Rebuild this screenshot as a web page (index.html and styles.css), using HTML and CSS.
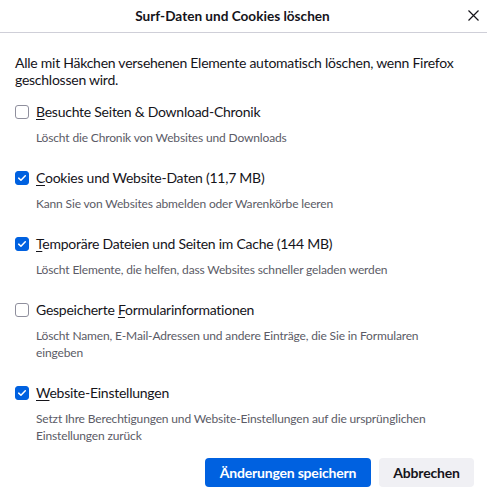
FILE: index.html
```html
<!DOCTYPE html>
<html lang="de">
<head>
<meta charset="utf-8">
<link rel="stylesheet" href="styles.css">
</head>
<body>
<div class="dialog">
  <header class="titlebar">
    <h1 class="title">Surf-Daten und Cookies löschen</h1>
    <button class="close" aria-label="Schließen">
      <svg width="11" height="11" viewBox="0 0 11 11"><path d="M0.5 0.5L10.5 10.5M10.5 0.5L0.5 10.5" stroke="#15141a" stroke-width="1.2" fill="none"/></svg>
    </button>
  </header>
  <main class="content">
    <p class="intro">Alle mit Häkchen versehenen Elemente automatisch löschen, wenn Firefox geschlossen wird.</p>
    <div class="options">
      <div class="option">
        <label class="row"><span class="box"></span><span class="label"><u>B</u>esuchte Seiten &amp; Download-Chronik</span></label>
        <p class="desc">Löscht die Chronik von Websites und Downloads</p>
      </div>
      <div class="option">
        <label class="row"><span class="box checked"><svg viewBox="0 0 16 16" width="16" height="16"><path d="M3.6 8.2L6.6 11.1L12.4 4.9" stroke="#fff" stroke-width="2" fill="none" stroke-linecap="round" stroke-linejoin="round"/></svg></span><span class="label"><u>C</u>ookies und Website-Daten (11,7 MB)</span></label>
        <p class="desc">Kann Sie von Websites abmelden oder Warenkörbe leeren</p>
      </div>
      <div class="option">
        <label class="row"><span class="box checked"><svg viewBox="0 0 16 16" width="16" height="16"><path d="M3.6 8.2L6.6 11.1L12.4 4.9" stroke="#fff" stroke-width="2" fill="none" stroke-linecap="round" stroke-linejoin="round"/></svg></span><span class="label"><u>T</u>emporäre Dateien und Seiten im Cache (144 MB)</span></label>
        <p class="desc">Löscht Elemente, die helfen, dass Websites schneller geladen werden</p>
      </div>
      <div class="option">
        <label class="row"><span class="box"></span><span class="label">Gespeicherte <u>F</u>ormularinformationen</span></label>
        <p class="desc">Löscht Namen, E-Mail-Adressen und andere Einträge, die Sie in Formularen eingeben</p>
      </div>
      <div class="option">
        <label class="row"><span class="box checked"><svg viewBox="0 0 16 16" width="16" height="16"><path d="M3.6 8.2L6.6 11.1L12.4 4.9" stroke="#fff" stroke-width="2" fill="none" stroke-linecap="round" stroke-linejoin="round"/></svg></span><span class="label"><u>W</u>ebsite-Einstellungen</span></label>
        <p class="desc">Setzt Ihre Berechtigungen und Website-Einstellungen auf die ursprünglichen Einstellungen zurück</p>
      </div>
    </div>
    <div class="actions">
      <button class="btn primary">Änderungen speichern</button>
      <button class="btn secondary">Abbrechen</button>
    </div>
  </main>
</div>
</body>
</html>
```

FILE: styles.css
```css
* { box-sizing: border-box; }
html, body { margin: 0; padding: 0; background: #fff; }
body {
  font-family: Lato, "Noto Sans", sans-serif;
  color: #15141a;
  width: 487px;
  height: 501px;
  overflow: hidden;
}
.titlebar {
  height: 33px;
  border-bottom: 1px solid #cfcfd8;
  display: flex;
  align-items: center;
  justify-content: center;
  padding-right: 22px;
  position: relative;
}
.title {
  margin: 0;
  font-size: 13.6px;
  font-weight: 700;
  line-height: 30px;
}
.close {
  position: absolute;
  right: 5px;
  top: 8px;
  width: 18px;
  height: 14px;
  border: 0;
  background: none;
  padding: 0;
  display: flex;
  align-items: center;
  justify-content: center;
}
.content {
  padding: 20px 13px 0 15px;
}
.intro {
  margin: 0;
  font-size: 14px;
  letter-spacing: -0.25px;
  line-height: 17px;
  padding-top: 1px;
  padding-right: 10px;
}
.options {
  margin-top: 15px;
  display: flex;
  flex-direction: column;
  gap: 23px;
}
.row {
  display: flex;
  align-items: center;
  gap: 7px;
  height: 18px;
}
.box {
  width: 14px;
  height: 14px;
  border: 1px solid #8f8f9d;
  border-radius: 3px;
  display: flex;
  align-items: center;
  justify-content: center;
  flex: none;
}
.box.checked {
  background: #0061e0;
  border-color: #0061e0;
}
.box svg { width: 14px; height: 14px; }
.label {
  font-size: 14px;
  letter-spacing: -0.25px;
  line-height: 18px;
}
.label u { text-decoration-thickness: 1px; text-underline-offset: 2px; }
.desc {
  margin: 8px 24px 0 21px;
  font-size: 12px;
  letter-spacing: -0.15px;
  line-height: 17px;
  color: #5b5b66;
}
.actions {
  margin-top: 14px;
  display: flex;
  justify-content: flex-end;
  gap: 8px;
}
.btn {
  font-family: inherit;
  font-size: 14px;
  letter-spacing: -0.2px;
  font-weight: 700;
  height: 29px;
  border: 0;
  border-radius: 4px;
  padding: 0;
  white-space: nowrap;
}
.primary { background: #0061e0; color: #fff; width: 166px; }
.secondary { background: #f0f0f4; color: #15141a; width: 95px; }
```
